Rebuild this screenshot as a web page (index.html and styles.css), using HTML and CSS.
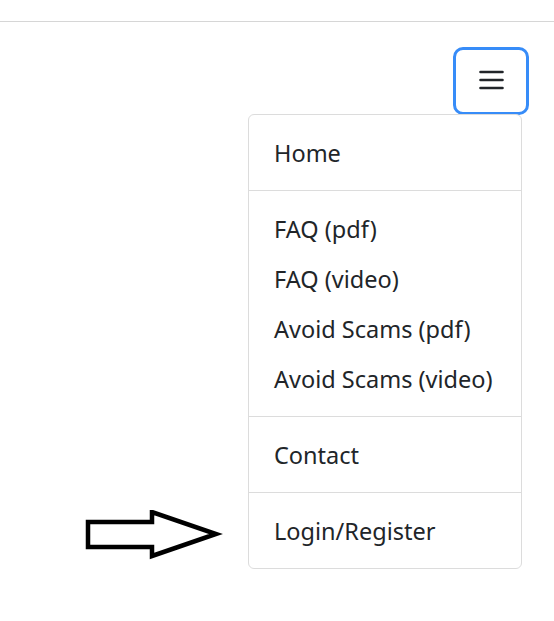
FILE: index.html
```html
<!DOCTYPE html>
<html lang="en">
<head>
<meta charset="utf-8">
<title>Menu</title>
<link rel="stylesheet" href="styles.css">
</head>
<body>
<header class="topbar"></header>
<main class="content">
  <button class="toggler" type="button" aria-label="Toggle navigation">
    <svg class="toggler-icon" viewBox="0 0 30 30" width="30" height="30" aria-hidden="true">
      <path d="M4.5 7h22M4.5 15h22M4.5 23h22" stroke="#212529" stroke-width="2.6" stroke-linecap="round" fill="none"/>
    </svg>
  </button>
  <ul class="dropdown">
    <li><a class="item" href="#">Home</a></li>
    <li class="divider"></li>
    <li><a class="item" href="#">FAQ (pdf)</a></li>
    <li><a class="item" href="#">FAQ (video)</a></li>
    <li><a class="item" href="#">Avoid Scams (pdf)</a></li>
    <li><a class="item" href="#">Avoid Scams (video)</a></li>
    <li class="divider"></li>
    <li><a class="item" href="#">Contact</a></li>
    <li class="divider"></li>
    <li><a class="item" href="#">Login/Register</a></li>
  </ul>
  <svg class="arrow" viewBox="0 0 140 50" width="140" height="50" aria-hidden="true">
    <path d="M3 12H67V2L131 24L67 46V37H3Z" fill="#fff" stroke="#000" stroke-width="4.5" stroke-linejoin="miter"/>
  </svg>
</main>
</body>
</html>
```
FILE: styles.css
```css
html, body {
  margin: 0;
  padding: 0;
  background: #fff;
}
body {
  font-family: "Noto Sans", "Open Sans", sans-serif;
  color: #212529;
}
.topbar {
  height: 21px;
  border-bottom: 1px solid #d6d6d6;
}
.content {
  position: relative;
  display: flex;
  flex-direction: column;
  align-items: flex-end;
  padding-right: 25px;
}
.toggler {
  margin-top: 25px;
  width: 76px;
  height: 68px;
  box-sizing: border-box;
  border: 3.5px solid #378cf8;
  border-radius: 10px;
  background: #fff;
  display: flex;
  align-items: center;
  justify-content: center;
  padding: 0 0 2px 0;
  cursor: pointer;
}
.toggler-icon {
  display: block;
}
.dropdown {
  list-style: none;
  margin: -1px 7px 0 0;
  padding: 12.5px 0;
  width: 274px;
  box-sizing: border-box;
  border: 1px solid #dcdcdc;
  border-radius: 6px;
  background: #fff;
}
.item {
  display: block;
  padding: 7.5px 25px 5px;
  font-size: 23.5px;
  line-height: 37.5px;
  color: #212529;
  text-decoration: none;
  white-space: nowrap;
}
.divider {
  height: 0;
  margin: 12.5px 0;
  border-top: 1px solid #dcdcdc;
}
.arrow {
  position: absolute;
  left: 85px;
  top: 488px;
}
```
